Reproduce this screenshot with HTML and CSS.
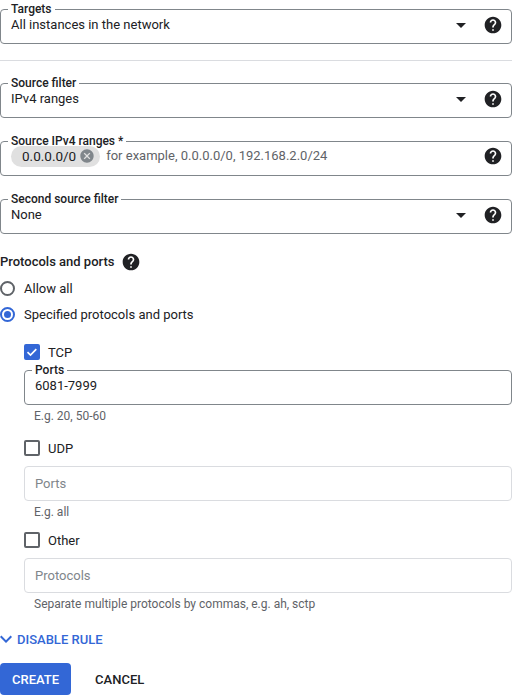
FILE: index.html
```html
<!DOCTYPE html>
<html>
<head>
<meta charset="utf-8">
<link rel="stylesheet" href="styles.css">
</head>
<body>
<div class="form">
  <fieldset class="field">
    <legend>Targets</legend>
    <div class="field-row">
      <span class="value">All instances in the network</span>
      <svg class="arrow" viewBox="0 0 24 24"><path d="M7 10l5 5 5-5z"/></svg>
      <svg class="help" viewBox="0 0 24 24"><path d="M12 2C6.48 2 2 6.48 2 12s4.48 10 10 10 10-4.48 10-10S17.52 2 12 2zm1 17h-2v-2h2v2zm2.070-7.75l-.9.92C13.45 12.9 13 13.5 13 15h-2v-.5c0-1.1.45-2.1 1.17-2.83l1.24-1.26c.37-.36.59-.86.59-1.41 0-1.1-.9-2-2-2s-2 .9-2 2H8c0-2.21 1.79-4 4-4s4 1.79 4 4c0 .88-.36 1.68-.93 2.25z"/></svg>
    </div>
  </fieldset>

  <hr class="divider">

  <fieldset class="field">
    <legend>Source filter</legend>
    <div class="field-row">
      <span class="value">IPv4 ranges</span>
      <svg class="arrow" viewBox="0 0 24 24"><path d="M7 10l5 5 5-5z"/></svg>
      <svg class="help" viewBox="0 0 24 24"><path d="M12 2C6.48 2 2 6.48 2 12s4.48 10 10 10 10-4.48 10-10S17.52 2 12 2zm1 17h-2v-2h2v2zm2.07-7.75l-.9.92C13.45 12.9 13 13.5 13 15h-2v-.5c0-1.1.45-2.1 1.17-2.83l1.24-1.26c.37-.36.59-.86.59-1.41 0-1.1-.9-2-2-2s-2 .9-2 2H8c0-2.21 1.79-4 4-4s4 1.79 4 4c0 .88-.36 1.68-.93 2.25z"/></svg>
    </div>
  </fieldset>

  <fieldset class="field">
    <legend>Source IPv4 ranges *</legend>
    <div class="field-row chips-row">
      <span class="chip">0.0.0.0/0
        <svg class="chip-x" viewBox="0 0 24 24"><path d="M12 2C6.47 2 2 6.47 2 12s4.47 10 10 10 10-4.47 10-10S17.53 2 12 2zm5 13.59L15.59 17 12 13.41 8.41 17 7 15.59 10.59 12 7 8.41 8.41 7 12 10.59 15.59 7 17 8.41 13.41 12 17 15.59z"/></svg>
      </span>
      <span class="value placeholder-dark">for example, 0.0.0.0/0, 192.168.2.0/24</span>
      <svg class="help" viewBox="0 0 24 24"><path d="M12 2C6.48 2 2 6.48 2 12s4.48 10 10 10 10-4.48 10-10S17.52 2 12 2zm1 17h-2v-2h2v2zm2.07-7.75l-.9.92C13.45 12.9 13 13.5 13 15h-2v-.5c0-1.1.45-2.1 1.17-2.83l1.24-1.26c.37-.36.59-.86.59-1.41 0-1.1-.9-2-2-2s-2 .9-2 2H8c0-2.21 1.79-4 4-4s4 1.79 4 4c0 .88-.36 1.68-.93 2.25z"/></svg>
    </div>
  </fieldset>

  <fieldset class="field">
    <legend>Second source filter</legend>
    <div class="field-row">
      <span class="value">None</span>
      <svg class="arrow" viewBox="0 0 24 24"><path d="M7 10l5 5 5-5z"/></svg>
      <svg class="help" viewBox="0 0 24 24"><path d="M12 2C6.48 2 2 6.48 2 12s4.48 10 10 10 10-4.48 10-10S17.52 2 12 2zm1 17h-2v-2h2v2zm2.07-7.75l-.9.92C13.45 12.9 13 13.5 13 15h-2v-.5c0-1.1.45-2.1 1.17-2.83l1.24-1.26c.37-.36.59-.86.59-1.41 0-1.1-.9-2-2-2s-2 .9-2 2H8c0-2.21 1.79-4 4-4s4 1.79 4 4c0 .88-.36 1.68-.93 2.25z"/></svg>
    </div>
  </fieldset>

  <div class="heading">
    <span>Protocols and ports</span>
    <svg class="help" viewBox="0 0 24 24"><path d="M12 2C6.48 2 2 6.48 2 12s4.48 10 10 10 10-4.48 10-10S17.52 2 12 2zm1 17h-2v-2h2v2zm2.07-7.75l-.9.92C13.45 12.9 13 13.5 13 15h-2v-.5c0-1.1.45-2.1 1.17-2.83l1.24-1.26c.37-.36.59-.86.59-1.41 0-1.1-.9-2-2-2s-2 .9-2 2H8c0-2.21 1.79-4 4-4s4 1.79 4 4c0 .88-.36 1.68-.93 2.25z"/></svg>
  </div>

  <div class="radios">
    <div class="radio-row"><span class="radio"></span><span>Allow all</span></div>
    <div class="radio-row"><span class="radio checked"></span><span>Specified protocols and ports</span></div>
  </div>

  <div class="protos">
    <div class="check-row first"><span class="checkbox checked"><svg viewBox="0 0 16 16"><polyline points="3.5,8.2 6.5,11 12.3,5.2"/></svg></span><span>TCP</span></div>
    <fieldset class="field sub">
      <legend>Ports</legend>
      <div class="field-row"><span class="value">6081-7999</span></div>
    </fieldset>
    <div class="hint">E.g. 20, 50-60</div>

    <div class="check-row udp"><span class="checkbox"></span><span>UDP</span></div>
    <div class="box">Ports</div>
    <div class="hint">E.g. all</div>

    <div class="check-row other"><span class="checkbox"></span><span>Other</span></div>
    <div class="box">Protocols</div>
    <div class="hint">Separate multiple protocols by commas, e.g. ah, sctp</div>
  </div>

  <div class="toggle">
    <svg class="chevron" viewBox="6 6 12 12"><path d="M16.59 8.59L12 13.17 7.41 8.59 6 10l6 6 6-6z"/></svg>
    <span>DISABLE RULE</span>
  </div>

  <div class="actions">
    <button class="btn primary">CREATE</button>
    <button class="btn text">CANCEL</button>
  </div>
</div>
</body>
</html>
```

FILE: styles.css
```css
* { box-sizing: border-box; }

body {
  margin: 0;
  background: #fff;
  color: #202124;
  font-family: Roboto, "Liberation Sans", Arial, sans-serif;
}

.form {
  width: 512px;
  padding-top: 2px;
}

.field {
  margin: 16px 0 0;
  padding: 0 8px 8px 10px;
  border: 1px solid #80868b;
  border-radius: 4px;
  min-width: 0;
}

.form > .field:first-child { margin-top: 0; }
.divider + .field { margin-top: 15px; }

.field legend {
  font-size: 12px;
  line-height: 14px;
  font-weight: 500;
  color: #202124;
  padding: 0 3px;
  margin-left: -3px;
}

.field-row {
  display: flex;
  align-items: center;
  height: 20px;
  margin-top: -1px;
  font-size: 13px;
  line-height: 20px;
}

.value {
  flex: 1;
  white-space: nowrap;
}

.placeholder-dark {
  color: #5f6368;
}

.arrow {
  width: 24px;
  height: 24px;
  fill: #202124;
  margin-right: 10px;
}

.help {
  width: 20px;
  height: 20px;
  fill: #202124;
  flex: none;
}

.divider {
  margin: 16px 0 0;
  border: none;
  height: 1px;
  background: #dadce0;
}

.chips-row {
  margin-top: -3px;
  height: 22px;
}

.chip {
  display: inline-flex;
  align-items: center;
  height: 21px;
  padding: 0 5px 0 11px;
  border-radius: 11px;
  background: #e0e0e0;
  font-size: 13.5px;
  color: #202124;
  margin-right: 6px;
}

.chip-x {
  width: 16px;
  height: 16px;
  fill: #80868b;
  margin-left: 3px;
}

.heading {
  display: flex;
  align-items: center;
  gap: 7px;
  margin-top: 18px;
  font-size: 13px;
  line-height: 20px;
  font-weight: 500;
}

.radios { margin-top: 3px; }

.radio-row {
  display: flex;
  align-items: center;
  gap: 9px;
  height: 26px;
  font-size: 13px;
}

.radio {
  width: 15px;
  height: 15px;
  border: 2px solid #5f6368;
  border-radius: 50%;
  display: flex;
  align-items: center;
  justify-content: center;
}

.radio.checked { border-color: #3367d6; }

.radio.checked::after {
  content: "";
  width: 7px;
  height: 7px;
  border-radius: 50%;
  background: #3367d6;
}

.protos {
  padding-left: 24px;
  margin-top: 15px;
}

.check-row {
  display: flex;
  align-items: center;
  gap: 8px;
  height: 20px;
  font-size: 13px;
}

.check-row.udp { margin-top: 14px; }
.check-row.other { margin-top: 10px; }

.checkbox {
  width: 16px;
  height: 16px;
  border: 2px solid #5f6368;
  border-radius: 2px;
  display: flex;
}

.checkbox.checked {
  background: #3367d6;
  border-color: #3367d6;
}

.checkbox svg {
  width: 16px;
  height: 16px;
  margin: -2px;
  fill: none;
  stroke: #fff;
  stroke-width: 1.7;
}

.field.sub { margin-top: 1px; }

.hint {
  margin-top: 3px;
  padding-left: 10px;
  font-size: 12px;
  line-height: 16px;
  color: #5f6368;
}

.box {
  margin-top: 8px;
  height: 35px;
  border: 1px solid #dadce0;
  border-radius: 4px;
  padding: 0 10px;
  display: flex;
  align-items: center;
  font-size: 13px;
  color: #80868b;
}

.toggle {
  display: flex;
  align-items: center;
  gap: 5px;
  margin-top: 17px;
  height: 20px;
  color: #3367d6;
  font-size: 13px;
  font-weight: 500;
}

.chevron {
  width: 12px;
  height: 12px;
  fill: #3367d6;
}

.actions {
  display: flex;
  gap: 12px;
  margin-top: 14px;
}

.btn {
  height: 32px;
  padding: 0 12px;
  border: none;
  border-radius: 4px;
  font-family: Roboto, "Liberation Sans", Arial, sans-serif;
  font-size: 13px;
  font-weight: 500;
  background: transparent;
  color: #202124;
}

.btn.primary {
  background: #3367d6;
  color: #fff;
}
```
